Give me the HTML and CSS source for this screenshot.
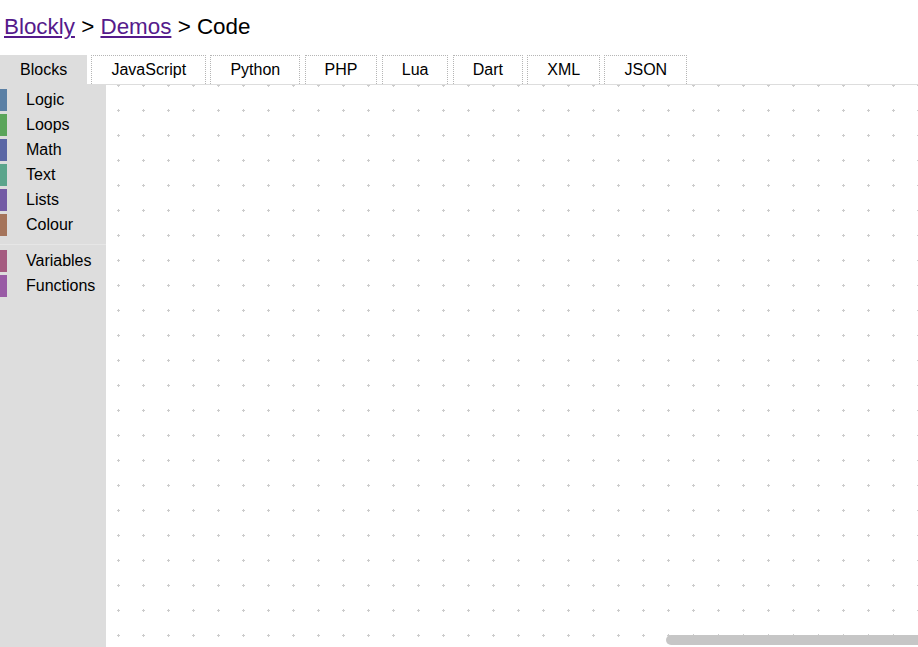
FILE: index.html
```html
<!DOCTYPE html>
<html>
<head>
<meta charset="utf-8">
<title>Blockly Demo: Code</title>
<link rel="stylesheet" href="styles.css">
</head>
<body>
<div class="page">
  <h1 class="title"><a class="crumb" href="#">Blockly</a> &gt; <a class="crumb" href="#">Demos</a> &gt; <span>Code</span></h1>
  <div class="tabrow">
    <div class="tab tab-on">Blocks</div>
    <div class="tab">JavaScript</div>
    <div class="tab">Python</div>
    <div class="tab">PHP</div>
    <div class="tab">Lua</div>
    <div class="tab">Dart</div>
    <div class="tab">XML</div>
    <div class="tab">JSON</div>
  </div>
  <div class="editor">
    <div class="toolbox">
      <div class="cat cat-logic">Logic</div>
      <div class="cat cat-loops">Loops</div>
      <div class="cat cat-math">Math</div>
      <div class="cat cat-text">Text</div>
      <div class="cat cat-lists">Lists</div>
      <div class="cat cat-colour">Colour</div>
      <div class="sep"></div>
      <div class="cat cat-vars">Variables</div>
      <div class="cat cat-funcs">Functions</div>
    </div>
    <div class="workspace">
      <svg class="grid" xmlns="http://www.w3.org/2000/svg">
        <defs>
          <pattern id="dots" patternUnits="userSpaceOnUse" x="11" y="-1" width="25" height="25">
            <rect x="0" y="1" width="3" height="1" fill="#ccc"></rect>
            <rect x="1" y="0" width="1" height="3" fill="#ccc"></rect>
          </pattern>
        </defs>
        <rect width="100%" height="100%" fill="#fff"></rect>
        <rect width="100%" height="100%" fill="url(#dots)"></rect>
      </svg>
      <div class="hscroll"></div>
    </div>
  </div>
</div>
</body>
</html>
```
FILE: styles.css
```css
html, body {
  margin: 0;
  padding: 0;
  height: 100%;
  overflow: hidden;
  background: #fff;
}
.page {
  height: 100%;
  display: flex;
  flex-direction: column;
  font-family: "Liberation Sans", Arial, sans-serif;
  color: #000;
}
.title {
  font-weight: normal;
  font-size: 22.4px;
  margin: 14px 0 15px 0;
  padding-left: 4px;
  line-height: normal;
}
.crumb {
  color: #551a8b;
  text-decoration: underline;
}
.tabrow {
  display: flex;
  gap: 4.3px;
  border-bottom: 1px solid #ddd;
  font-size: 16px;
}
.tab {
  padding: 5px 19px;
  border: 1px dotted #b5b5b5;
  border-bottom: none;
  background: #fff;
  line-height: 18.4px;
}
.tab-on {
  background: #ddd;
  border-color: #ddd;
}
.editor {
  flex: 1;
  display: flex;
  min-height: 0;
}
.toolbox {
  width: 106px;
  flex: none;
  background: #ddd;
  padding-top: 4px;
  font-size: 16px;
}
.cat {
  height: 22px;
  line-height: 22px;
  margin-bottom: 3px;
  padding-left: 19px;
  border-left: 7px solid #888;
}
.cat-logic { border-left-color: #5b80a5; }
.cat-loops { border-left-color: #5ba55b; }
.cat-math { border-left-color: #5b67a5; }
.cat-text { border-left-color: #5ba58c; }
.cat-lists { border-left-color: #745ba5; }
.cat-colour { border-left-color: #a5745b; }
.cat-vars { border-left-color: #a55b80; }
.cat-funcs { border-left-color: #995ba5; }
.sep {
  border-bottom: 1px solid #e6e6e6;
  margin: 8px 0 5px 0;
}
.workspace {
  flex: 1;
  position: relative;
  overflow: hidden;
}
.grid {
  display: block;
  width: 100%;
  height: 100%;
}
.hscroll {
  position: absolute;
  left: 560px;
  right: -10px;
  bottom: 2px;
  height: 10px;
  border-radius: 5px;
  background: #c6c6c6;
}
```
